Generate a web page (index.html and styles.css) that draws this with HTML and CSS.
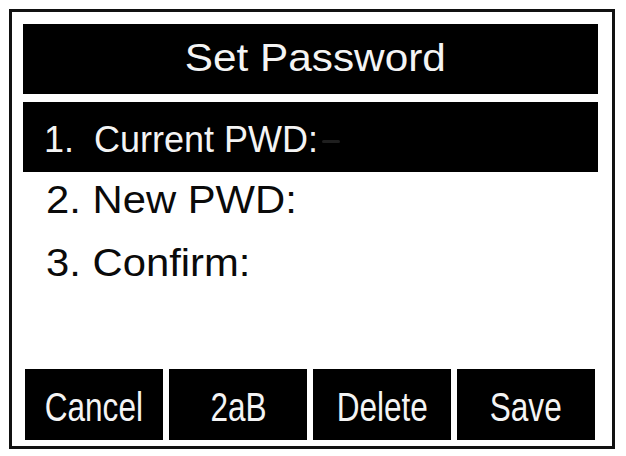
FILE: index.html
```html
<!DOCTYPE html>
<html lang="en">
<head>
<meta charset="utf-8">
<title>Set Password</title>
<link rel="stylesheet" href="styles.css">
</head>
<body>
<div class="screen">
  <div class="title"><span class="title-text">Set Password</span></div>
  <div class="item selected"><span class="item-text">1.&nbsp; Current PWD:</span><span class="cursor"></span></div>
  <div class="list">
    <div class="item plain"><span class="item-text wide">2. New PWD:</span></div>
    <div class="item plain"><span class="item-text wide">3. Confirm:</span></div>
  </div>
  <div class="softkeys">
    <div class="key"><span class="key-text">Cancel</span></div>
    <div class="key"><span class="key-text">2aB</span></div>
    <div class="key"><span class="key-text">Delete</span></div>
    <div class="key"><span class="key-text">Save</span></div>
  </div>
</div>
</body>
</html>
```

FILE: styles.css
```css
html, body {
  margin: 0;
  padding: 0;
  background: #ffffff;
}

body {
  width: 626px;
  height: 456px;
  font-family: "Liberation Sans", Arial, sans-serif;
}

.screen {
  box-sizing: border-box;
  width: 606px;
  height: 440px;
  margin: 9px 0 0 9px;
  border: 3px solid #111111;
  padding: 12px 14px 6px 11px;
  display: flex;
  flex-direction: column;
  background: #ffffff;
}

.title {
  height: 70px;
  background: #000000;
  color: #f4f4f4;
  text-align: center;
  box-sizing: border-box;
  padding-left: 10px;
  font-size: 39px;
  line-height: 67px;
  white-space: nowrap;
}

.title-text {
  display: inline-block;
  transform: scaleX(1.085);
}

.item {
  white-space: nowrap;
  box-sizing: border-box;
}

.selected {
  margin-top: 8px;
  height: 70px;
  background: #000000;
  color: #f4f4f4;
  font-size: 36px;
  line-height: 63px;
  padding: 6px 0 0 21px;
  display: flex;
  align-items: baseline;
}

.cursor {
  display: inline-block;
  width: 18px;
  height: 3px;
  margin-left: 4px;
  background: #1f1f1f;
  border-radius: 2px;
  align-self: center;
  position: relative;
  top: 1px;
}

.list {
  margin-top: -3px;
}

.plain {
  color: #0a0a0a;
  font-size: 38px;
  line-height: 63px;
  padding-left: 23px;
}

.item-text {
  display: inline-block;
}

.wide {
  transform: scaleX(1.1);
  transform-origin: left center;
}

.softkeys {
  margin: auto 3px 0 2px;
  display: grid;
  grid-template-columns: repeat(4, 138px);
  column-gap: 6px;
}

.key {
  box-sizing: border-box;
  height: 71px;
  background: #000000;
  color: #f4f4f4;
  font-size: 41px;
  line-height: 66px;
  padding-top: 5px;
  text-align: center;
  white-space: nowrap;
}

.key-text {
  display: inline-block;
  transform: scaleX(0.77);
}
```
